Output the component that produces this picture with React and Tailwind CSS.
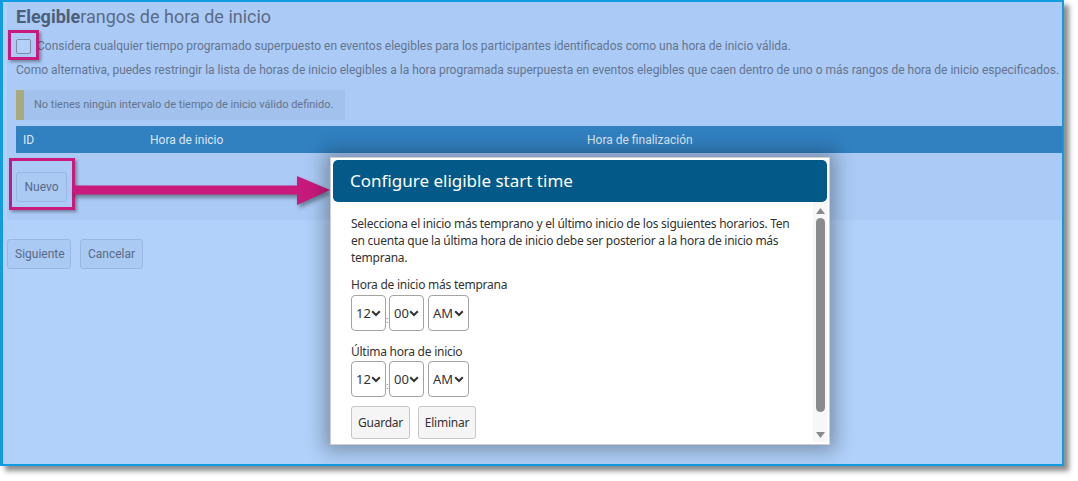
import React from 'react';

const pageFont = { fontFamily: 'Roboto, "Liberation Sans", sans-serif' };
const modalFont = { fontFamily: '"Noto Sans", "Open Sans", sans-serif' };

const Chevron = () => (
  <svg width="10" height="7" viewBox="0 0 10 7" className="shrink-0">
    <polyline points="1.2,1.2 5,5 8.8,1.2" fill="none" stroke="#333" strokeWidth="2" />
  </svg>
);

const TimeSelect = ({ value, width }) => (
  <div className={`flex h-[36px] items-center justify-between rounded-[4px] border border-[#a3a3a3] bg-white pl-[4px] pr-[4px] text-[13px] text-[#333] ${width}`}>
    <span>{value}</span>
    <Chevron />
  </div>
);

const TimeRow = () => (
  <div className="flex items-end">
    <TimeSelect value="12" width="w-[35px]" />
    <span className="w-[3px] pb-[7px] text-[9px] leading-none text-[#5a6fa0]">:</span>
    <TimeSelect value="00" width="w-[35px]" />
    <div className="w-[4px]" />
    <TimeSelect value="AM" width="w-[41px]" />
  </div>
);

const PageButton = ({ children, className = '' }) => (
  <button className={`h-[30px] rounded-[3px] border border-[#98b7e2] bg-[#aac9f3] px-[7px] text-[12px] text-[#5a6a86] ${className}`}>
    {children}
  </button>
);

const App = () => {
  return (
    <div className="relative h-[481px] w-[1078px] overflow-hidden bg-white" style={pageFont}>
      {/* framed page */}
      <div className="h-[466px] w-[1064px] border-2 border-l-[3px] border-[#109be2] bg-[#b1d1fa] shadow-[5px_5px_5px_rgba(0,0,0,0.45)]">
        <div className="ml-[4px] h-[218px] bg-[#abcbf6] pl-[9px] pt-[3px]">
          <h2 className="text-[18px] leading-[24px] text-[#5b6b86]">
            <span className="font-bold text-[#4e5e79]">Elegible</span>rangos de hora de inicio
          </h2>
          <div className="mt-[8px] flex h-[18px] items-center whitespace-nowrap text-[12px] text-[#64748f]">
            <div className="h-[15px] w-[15px] rounded-[2px] border border-[#7d8ca6] bg-[#b3d1f7]" />
            <span className="ml-[6px]">Considera cualquier tiempo programado superpuesto en eventos elegibles para los participantes identificados como una hora de inicio válida.</span>
          </div>
          <p className="mt-[6px] h-[18px] whitespace-nowrap text-[12px] leading-[18px] text-[#64748f]">
            Como alternativa, puedes restringir la lista de horas de inicio elegibles a la hora programada superpuesta en eventos elegibles que caen dentro de uno o más rangos de hora de inicio especificados.
          </p>
          <div className="mt-[11px] flex h-[30px] w-[329px] items-center border-l-[8px] border-[#a8aa7b] bg-[#a2c1ec] pl-[10px] text-[11px] text-[#64748f]">
            No tienes ningún intervalo de tiempo de inicio válido definido.
          </div>
          <div className="mt-[6px] grid h-[27px] grid-cols-[127px_437px_1fr] items-center bg-[#3180c0] pl-[7px] text-[12px] text-[#dce7f3]">
            <span>ID</span>
            <span>Hora de inicio</span>
            <span>Hora de finalización</span>
          </div>
          <PageButton className="mt-[19px] w-[51px]">Nuevo</PageButton>
        </div>
        <div className="ml-[4px] mt-[19px] flex gap-[9px]">
          <PageButton className="w-[64px] h-[29px]">Siguiente</PageButton>
          <PageButton className="w-[63px] h-[29px]">Cancelar</PageButton>
        </div>
      </div>

      {/* annotations */}
      <div className="absolute left-[8px] top-[30px] h-[30px] w-[31px] border-[3px] border-[#c8197d] shadow-[2px_2px_3px_rgba(0,0,0,0.35)]" />
      <div className="absolute left-[9px] top-[158px] h-[52px] w-[66px] border-[3px] border-[#c8197d] shadow-[2px_2px_3px_rgba(0,0,0,0.35)]" />
      <svg className="absolute left-[68px] top-[172px] drop-shadow-[2px_3px_2px_rgba(0,0,0,0.4)]" width="266" height="38" viewBox="0 0 266 38">
        <rect x="4" y="13.5" width="228" height="9" rx="4.5" fill="#c8197d" />
        <polygon points="229,4 262,18 229,33" fill="#c8197d" />
      </svg>

      {/* modal */}
      <div className="absolute left-[330px] top-[157px] flex h-[288px] w-[500px] flex-col border border-[#cfcfcf] bg-white p-[2px] shadow-[0_0_18px_6px_rgba(0,0,0,0.3)]" style={modalFont}>
        <div className="flex h-[42px] shrink-0 items-center rounded-[5px] bg-[#035a88] px-[17px] text-[17px] text-white">
          Configure eligible start time
        </div>
        <div className="flex min-h-0 flex-1">
          <div className="flex-1 pl-[18px] pr-[22px] pt-[13px] text-[12px] leading-[17px] tracking-[-0.25px] text-[#333]">
            <p>Selecciona el inicio más temprano y el último inicio de los siguientes horarios. Ten en cuenta que la última hora de inicio debe ser posterior a la hora de inicio más temprana.</p>
            <p className="mt-[10px]">Hora de inicio más temprana</p>
            <div className="mt-[2px] tracking-normal"><TimeRow /></div>
            <p className="mt-[12px]">Última hora de inicio</p>
            <div className="mt-[1px] tracking-normal"><TimeRow /></div>
            <div className="mt-[9px] flex gap-[8px]">
              <button className="h-[33px] w-[59px] rounded-[3px] border border-[#c6c6c6] bg-[#f5f5f5] text-[12px] text-[#333]">Guardar</button>
              <button className="h-[33px] w-[58px] rounded-[3px] border border-[#c6c6c6] bg-[#f5f5f5] text-[12px] text-[#333]">Eliminar</button>
            </div>
          </div>
          <div className="flex w-[14px] flex-col items-center bg-[#f7f7f7] pb-[4px] pt-[6px]">
            <svg width="9" height="6" viewBox="0 0 9 6"><polygon points="4.5,0 9,6 0,6" fill="#8a8a8a" /></svg>
            <div className="mt-[4px] w-[9px] flex-1 rounded-full bg-[#8b8b8b]" />
            <div className="h-[20px]" />
            <svg width="9" height="6" viewBox="0 0 9 6"><polygon points="0,0 9,0 4.5,6" fill="#8a8a8a" /></svg>
          </div>
        </div>
      </div>
    </div>
  );
};

export default App;
